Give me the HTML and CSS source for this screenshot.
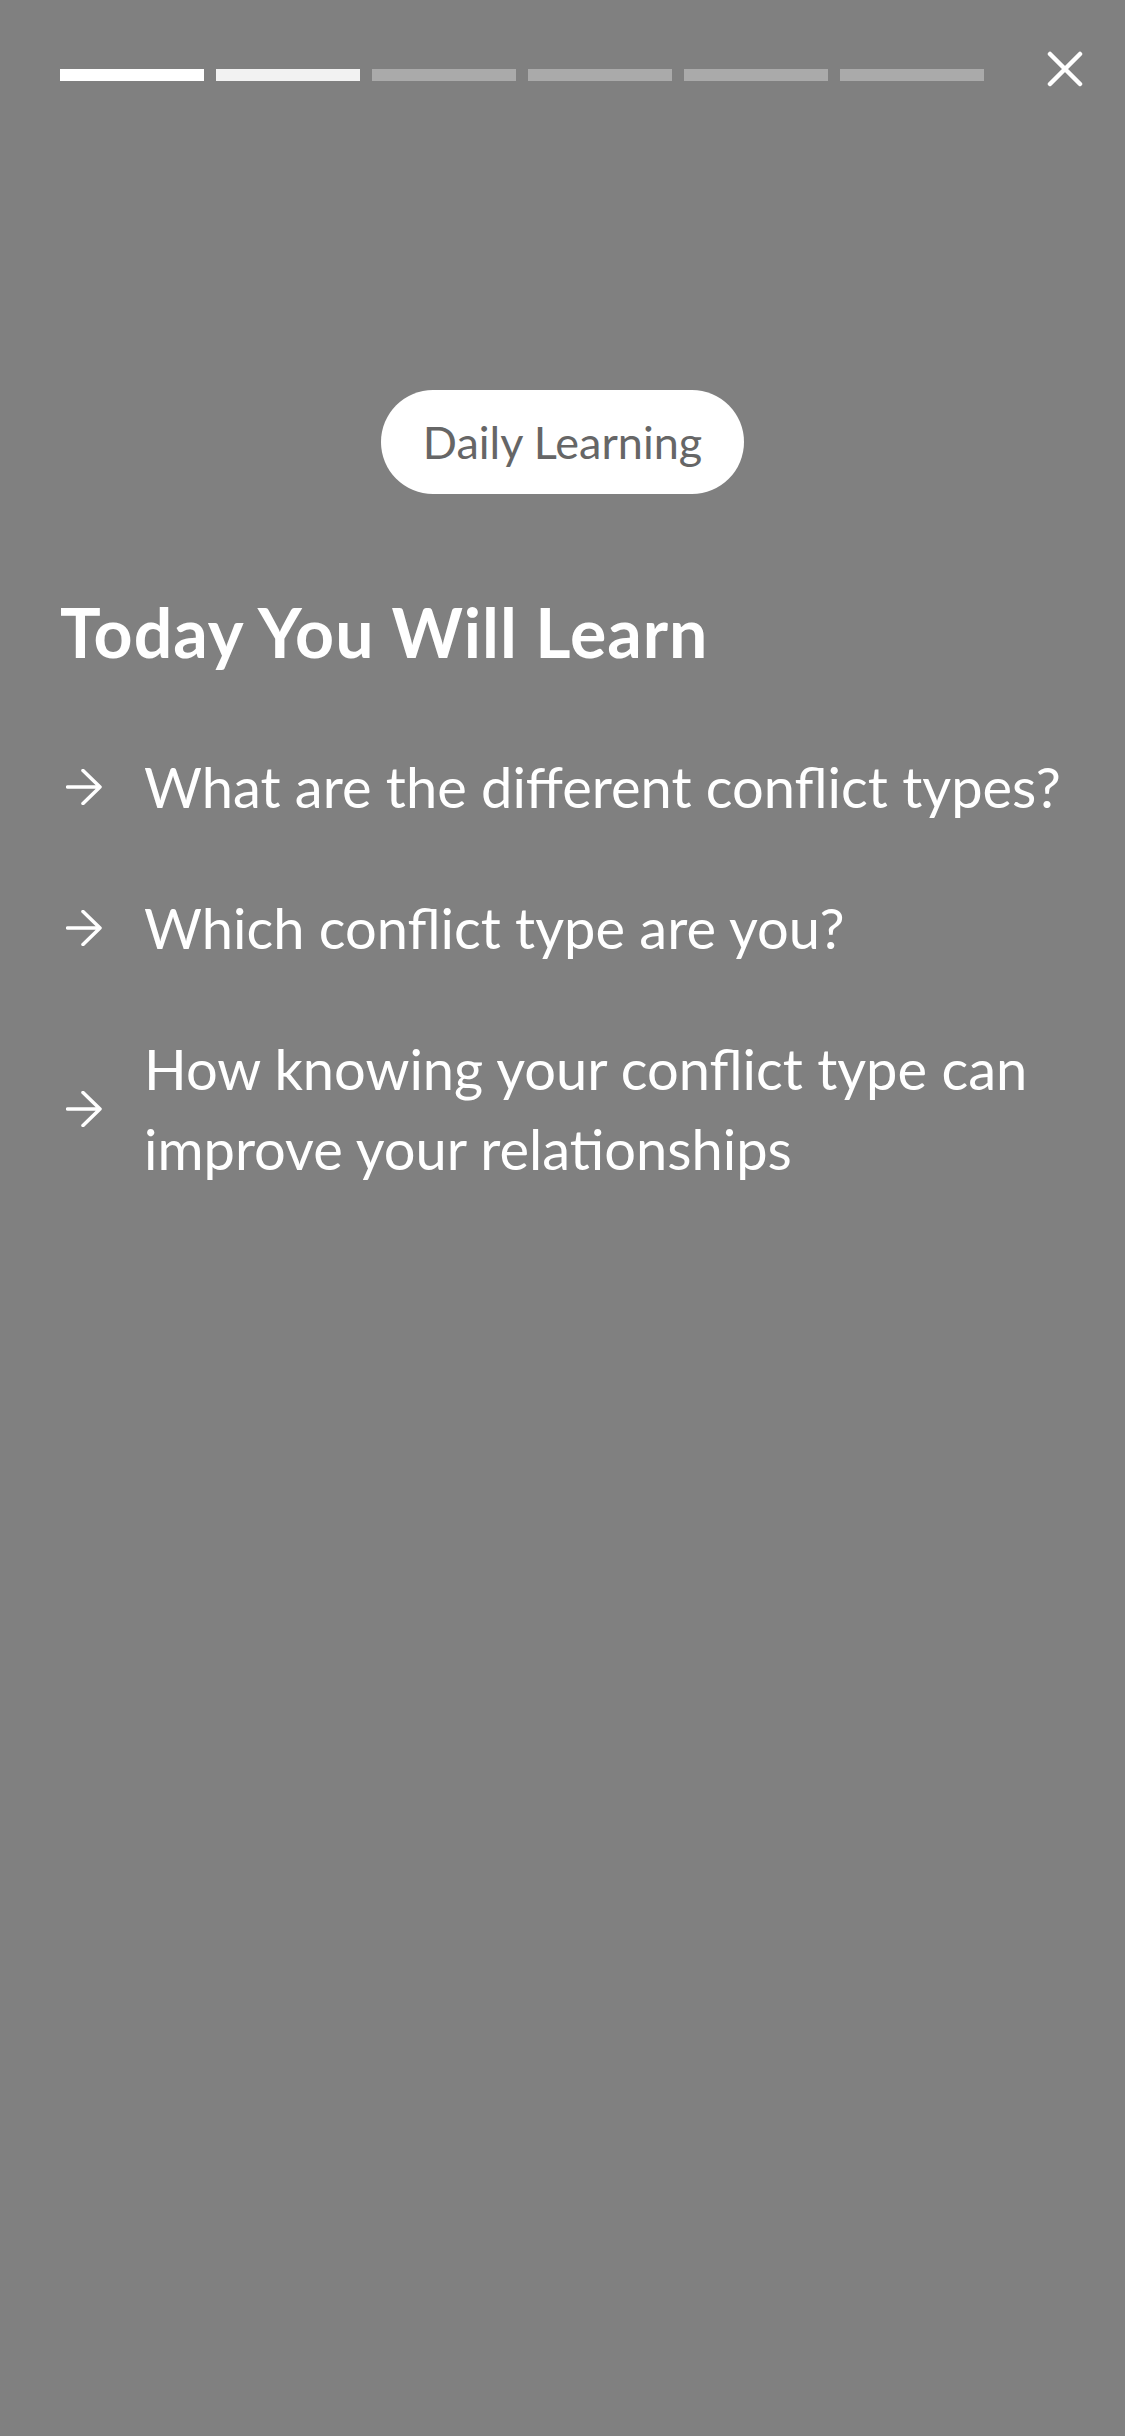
FILE: index.html
```html
<!DOCTYPE html>
<html lang="en">
<head>
<meta charset="utf-8">
<title>Daily Learning</title>
<link rel="stylesheet" href="styles.css">
</head>
<body>
<div class="screen">
  <header class="topbar">
    <div class="progress">
      <span class="seg seg-done"></span>
      <span class="seg seg-current"></span>
      <span class="seg"></span>
      <span class="seg"></span>
      <span class="seg"></span>
      <span class="seg"></span>
    </div>
    <button class="close" aria-label="Close">
      <svg viewBox="0 0 36 36" width="36" height="36">
        <path d="M3 3 L33 33 M33 3 L3 33" stroke="#fff" stroke-width="4.5" stroke-linecap="round" fill="none"/>
      </svg>
    </button>
  </header>
  <main class="content">
    <div class="pill-row"><span class="pill">Daily Learning</span></div>
    <h1 class="title">Today You Will Learn</h1>
    <ul class="list">
      <li class="item">
        <svg class="arrow" viewBox="0 0 36 36" width="36" height="36"><path d="M1.5 18 H34 M17 1.5 L34 18 L17 34.5" stroke="#fff" stroke-width="3.5" stroke-linecap="round" stroke-linejoin="round" fill="none"/></svg>
        <span class="item-text">What are the different conflict types?</span>
      </li>
      <li class="item">
        <svg class="arrow" viewBox="0 0 36 36" width="36" height="36"><path d="M1.5 18 H34 M17 1.5 L34 18 L17 34.5" stroke="#fff" stroke-width="3.5" stroke-linecap="round" stroke-linejoin="round" fill="none"/></svg>
        <span class="item-text">Which conflict type are you?</span>
      </li>
      <li class="item">
        <svg class="arrow" viewBox="0 0 36 36" width="36" height="36"><path d="M1.5 18 H34 M17 1.5 L34 18 L17 34.5" stroke="#fff" stroke-width="3.5" stroke-linecap="round" stroke-linejoin="round" fill="none"/></svg>
        <span class="item-text">How knowing your conflict type can improve your relationships</span>
      </li>
    </ul>
  </main>
</div>
</body>
</html>
```
FILE: styles.css
```css
html, body {
  margin: 0;
  padding: 0;
}
body {
  background: #808080;
  font-family: "Lato", "Open Sans", "Liberation Sans", sans-serif;
  color: #ffffff;
}
.screen {
  width: 1125px;
  min-height: 2436px;
  background: #808080;
}
.topbar {
  display: flex;
  align-items: flex-start;
  padding: 51px 0 0 60px;
}
.progress {
  display: flex;
  gap: 12px;
  margin-top: 18px;
}
.seg {
  display: block;
  width: 144px;
  height: 12px;
  background: #aaaaaa;
}
.seg-done {
  background: #ffffff;
}
.seg-current {
  background: #f2f2f2;
}
.close {
  margin-left: 63px;
  width: 36px;
  height: 36px;
  padding: 0;
  border: 0;
  background: none;
  display: block;
}
.close svg {
  display: block;
}
.content {
  padding: 303px 30px 0 60px;
}
.pill-row {
  display: flex;
  justify-content: center;
  margin: 0 -30px 0 -60px;
}
.pill {
  display: block;
  height: 104px;
  line-height: 104px;
  padding: 0 42px;
  border-radius: 52px;
  background: #ffffff;
  color: #666666;
  font-size: 45px;
  font-weight: 400;
}
.title {
  margin: 98px 0 0 0;
  font-size: 68px;
  line-height: 80px;
  letter-spacing: 1px;
  font-weight: 700;
  color: #ffffff;
}
.list {
  list-style: none;
  margin: 75px 0 0 0;
  padding: 0 0 0 6px;
  display: flex;
  flex-direction: column;
  gap: 61px;
}
.item {
  display: flex;
  align-items: center;
  gap: 42px;
}
.arrow {
  flex: none;
  display: block;
}
.item-text {
  font-size: 56px;
  line-height: 80px;
  color: #ffffff;
}
```
